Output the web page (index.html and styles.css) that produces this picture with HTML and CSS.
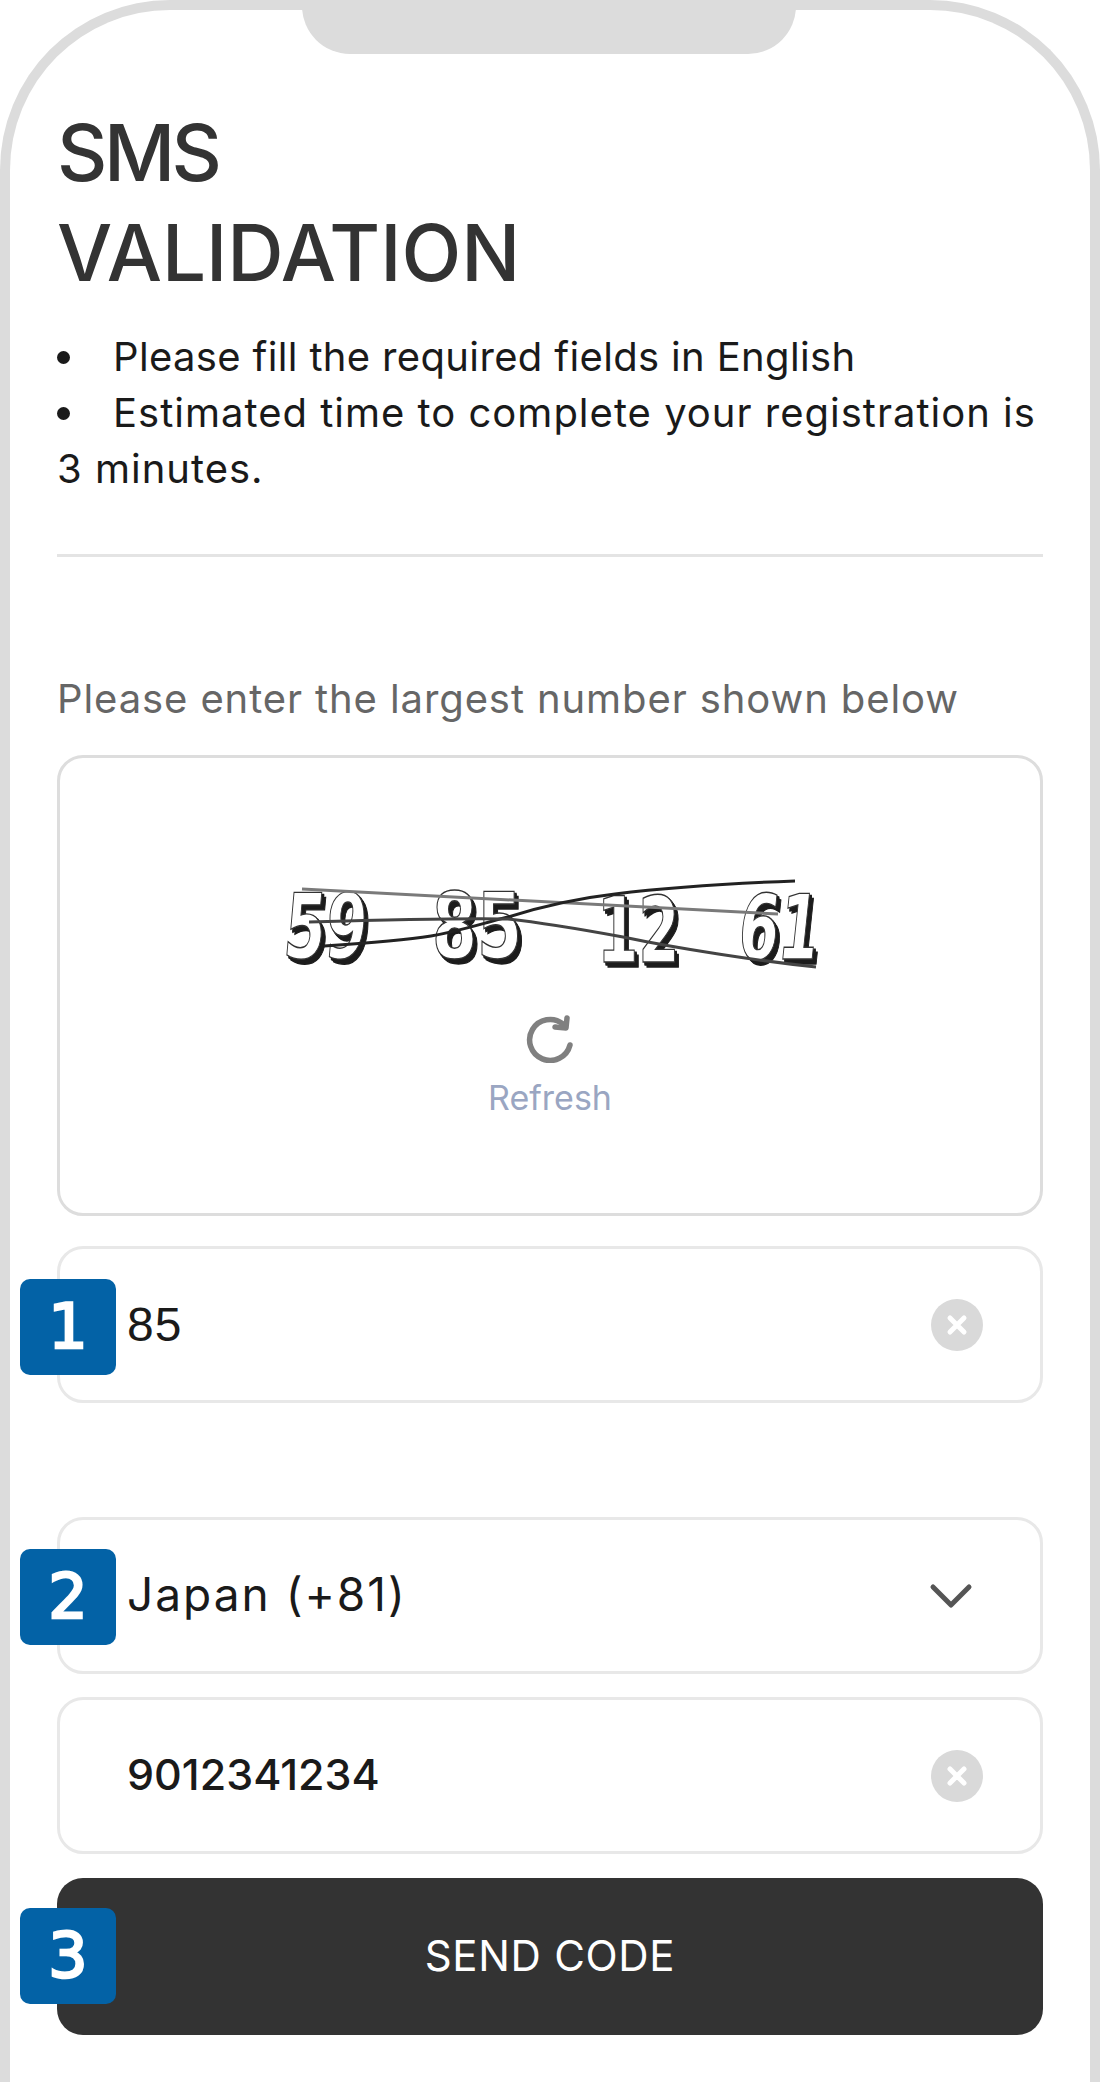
FILE: index.html
```html
<!DOCTYPE html>
<html lang="en">
  <head>
    <meta charset="utf-8">
    <title>SMS Validation</title>
    <link rel="stylesheet" href="styles.css">
  </head>
  <body>
    <div class="phone">
      <div class="notch"></div>

      <h1 class="title"><span class="short">SMS</span><br>VALIDATION</h1>
      <ul class="notes">
        <li>Please fill the required fields in English</li>
        <li class="long">Estimated time to complete your registration is 3 minutes.</li>
      </ul>
      <hr class="divider">

      <p class="label">Please enter the largest number shown below</p>
      <div class="captcha">
        <svg class="captcha-img" width="620" height="140" viewBox="-40 -20 620 140">
          <g class="digits">
            <text transform="translate(2 81) skewX(-5) scale(.66 1)">59</text>
            <text transform="translate(152 81) scale(.72 1)">85</text>
            <text transform="translate(317 85) scale(.66 1)">12</text>
            <text transform="translate(456 82) skewX(-6) scale(.64 1)">61</text>
          </g>
          <path class="line-grey" d="M22 12 L498 37"/>
          <path class="line-dark" d="M44 69 C90 66 120 64 151 59 C180 54 200 47 228 40 C260 30 300 21 335 17 C400 9 460 6 515 4"/>
          <path class="line-mid" d="M29 45 C100 43 180 41 228 42 C265 46 305 53 343 60 C400 72 480 84 536 90"/>
        </svg>
        <svg class="refresh-icon" width="48" height="48" viewBox="0 0 48 48">
          <path d="M44 30 A20.500 20.500 0 1 1 37 9"/>
          <path d="M41 3 L40 13 L29 12"/>
        </svg>
        <div class="refresh-text">Refresh</div>
      </div>

      <div class="field first">
        <span class="badge">1</span>
        <span class="value answer">85</span>
        <svg class="clear" width="52" height="52" viewBox="0 0 52 52">
          <circle cx="26" cy="26" r="26"/>
          <path d="M19 19 L33 33 M33 19 L19 33"/>
        </svg>
      </div>

      <div class="field second">
        <span class="badge">2</span>
        <span class="value country">Japan (+81)</span>
        <svg class="chevron" width="44" height="26" viewBox="0 0 44 26">
          <path d="M4 4 L22 22 L40 4"/>
        </svg>
      </div>

      <div class="field third">
        <span class="value">9012341234</span>
        <svg class="clear" width="52" height="52" viewBox="0 0 52 52">
          <circle cx="26" cy="26" r="26"/>
          <path d="M19 19 L33 33 M33 19 L19 33"/>
        </svg>
      </div>

      <button class="send">
        <span class="badge">3</span>
        SEND CODE
      </button>
    </div>
  </body>
</html>
```

FILE: styles.css
```css
* {
  box-sizing: border-box;
}

body {
  margin: 0;
  background: #fff;
  font-family: "Inter", "Liberation Sans", sans-serif;
}

/* phone outline, open at the bottom */
.phone {
  position: relative;
  width: 1100px;
  height: 2082px;
  padding: 93px 47px 0;
  border: 10px solid #dcdcdc;
  border-bottom: none;
  border-radius: 170px 170px 0 0;
  overflow: hidden;
}

.notch {
  position: absolute;
  top: -10px;
  left: 292px;
  width: 494px;
  height: 54px;
  background: #dcdcdc;
  border-radius: 0 0 48px 48px;
}

.title {
  margin: 0;
  font-size: 78px;
  font-weight: 500;
  line-height: 100px;
  color: #333;
}

.title .short {
  letter-spacing: -3.500px;
}

.notes {
  margin: 26px 0 0;
  padding: 0;
  list-style: none;
  font-size: 40px;
  letter-spacing: 0.350px;
  line-height: 56px;
  color: #1a1a1a;
}

.notes .long {
  letter-spacing: 1px;
}

.notes li::before {
  content: "";
  display: inline-block;
  width: 13px;
  height: 13px;
  margin: 0 43px 6px 0;
  background: #1a1a1a;
  border-radius: 50%;
  vertical-align: middle;
}

.divider {
  height: 3px;
  margin: 57px 0 0;
  border: 0;
  background: #e4e4e4;
}

.label {
  margin: 114px 0 0;
  font-size: 40px;
  letter-spacing: 0.900px;
  line-height: 56px;
  color: #666;
}

.captcha {
  display: flex;
  flex-direction: column;
  align-items: center;
  height: 461px;
  margin-top: 28px;
  padding-top: 99px;
  border: 3px solid #ddd;
  border-radius: 26px;
}

.captcha-img {
  display: block;
}

.digits text {
  font-family: "DejaVu Sans", sans-serif;
  font-size: 90px;
  font-weight: 700;
  fill: #fff;
  stroke: #333;
  stroke-width: 1.400px;
}

.digits {
  filter: drop-shadow(2px 3px 0 #1c1c1c) drop-shadow(2px 2px 0 #1c1c1c);
}

.line-grey,
.line-dark,
.line-mid {
  fill: none;
  stroke-width: 3px;
}

.line-grey {
  stroke: #7a7a7a;
}

.line-dark {
  stroke: #222;
}

.line-mid {
  stroke: #444;
}

.refresh-icon {
  display: block;
  margin-top: 18px;
  fill: none;
  stroke: #808080;
  stroke-width: 5.500px;
  stroke-linecap: round;
  stroke-linejoin: round;
}

.refresh-text {
  margin-top: 13px;
  font-size: 34px;
  line-height: 44px;
  color: #9aa6c2;
}

.field {
  position: relative;
  display: flex;
  align-items: center;
  justify-content: space-between;
  height: 157px;
  padding: 0 57px 0 67px;
  border: 3px solid #e8e8e8;
  border-radius: 26px;
}

.field.first {
  margin-top: 30px;
}

.field.second {
  margin-top: 114px;
}

.field.third {
  margin-top: 23px;
}

.value {
  margin-bottom: 3px;
  font-size: 43px;
  font-weight: 500;
  color: #1a1a1a;
}

.value.country {
  font-size: 46px;
  font-weight: 400;
  letter-spacing: 2px;
}

.value.answer {
  margin-bottom: 0;
  font-family: "Liberation Sans", sans-serif;
  font-size: 48px;
  font-weight: 400;
  letter-spacing: 1px;
}

.clear circle {
  fill: #d9d9d9;
}

.clear path {
  fill: none;
  stroke: #fff;
  stroke-width: 5px;
  stroke-linecap: round;
}

.chevron {
  margin-right: 10px;
}

.chevron path {
  fill: none;
  stroke: #555;
  stroke-width: 5px;
  stroke-linecap: round;
  stroke-linejoin: round;
}

.send {
  position: relative;
  display: block;
  width: 100%;
  height: 157px;
  margin-top: 24px;
  padding-bottom: 4px;
  border: 0;
  border-radius: 26px;
  background: #333;
  color: #fff;
  font-family: inherit;
  font-size: 42px;
  font-weight: 400;
  letter-spacing: 0.700px;
}

/* numbered step markers sitting over the fields */
.badge {
  position: absolute;
  top: 30px;
  left: -40px;
  width: 96px;
  height: 96px;
  background: #0362a6;
  border-radius: 10px;
  color: #fff;
  font-family: "DejaVu Sans", sans-serif;
  font-size: 62px;
  font-weight: 400;
  letter-spacing: 0;
  line-height: 96px;
  text-align: center;
  -webkit-text-stroke: 2.500px #fff;
}

.second .badge {
  top: 29px;
}

.send .badge {
  left: -37px;
  top: 30px;
}
```
